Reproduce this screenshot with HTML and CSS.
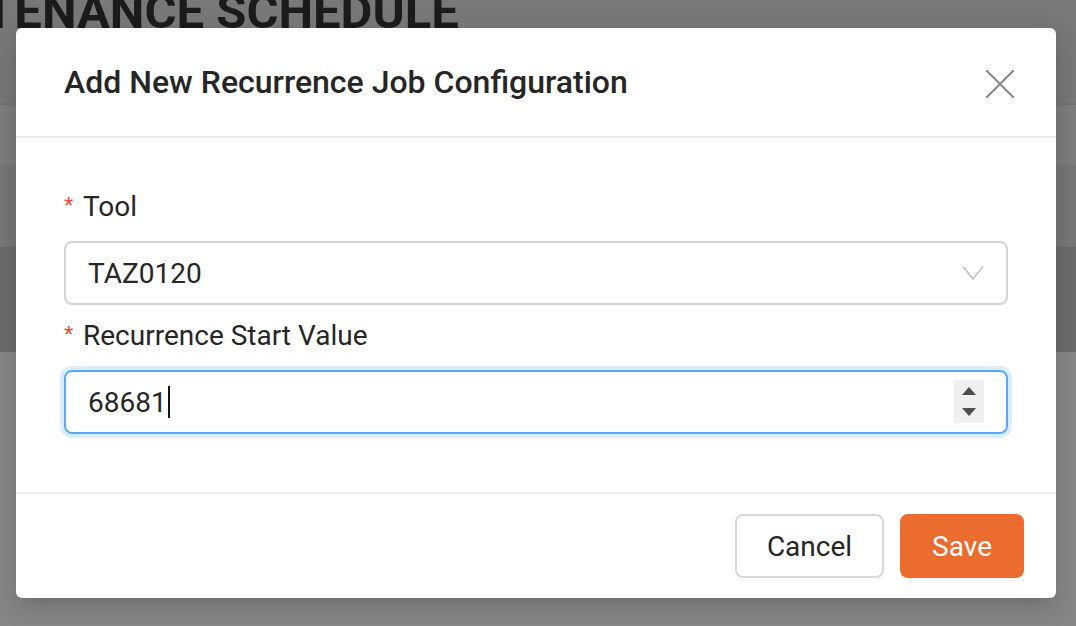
FILE: index.html
```html
<!DOCTYPE html>
<html lang="en">
<head>
<meta charset="utf-8">
<title>Add New Recurrence Job Configuration</title>
<link rel="stylesheet" href="styles.css">
</head>
<body>
<div class="page">
  <div class="page-head"><h1 class="page-title">TENANCE SCHEDULE</h1></div>
  <div class="band band-line"></div>
  <div class="band band-a"></div>
  <div class="band band-b"></div>
  <div class="band band-c"></div>
  <div class="band band-d"></div>
</div>

<div class="modal">
  <div class="modal-header">
    <div class="modal-title">Add New Recurrence Job Configuration</div>
    <button class="modal-close" aria-label="Close">
      <svg width="28" height="28" viewBox="0 0 28 28"><path d="M1 1 L27 27 M27 1 L1 27" stroke="#8a8a8a" stroke-width="2.2" fill="none" stroke-linecap="square"/></svg>
    </button>
  </div>
  <div class="modal-body">
    <div class="form-item">
      <label class="form-label"><span class="req">*</span>Tool</label>
      <div class="select">
        <span class="select-value">TAZ0120</span>
        <svg class="chevron" width="22" height="16" viewBox="0 0 22 16"><polyline points="1,1.5 11,14 21,1.5" fill="none" stroke="#c2c2c2" stroke-width="1.6"/></svg>
      </div>
    </div>
    <div class="form-item second">
      <label class="form-label"><span class="req">*</span>Recurrence Start Value</label>
      <div class="input focused">
        <span class="input-value">68681</span><span class="caret"></span>
        <div class="spinner">
          <span class="tri up"></span>
          <span class="tri down"></span>
        </div>
      </div>
    </div>
  </div>
  <div class="modal-footer">
    <button class="btn">Cancel</button>
    <button class="btn btn-primary">Save</button>
  </div>
</div>
</body>
</html>
```
FILE: styles.css
```css
* { box-sizing: border-box; }
html, body { margin: 0; padding: 0; }
body {
  width: 1076px;
  height: 626px;
  overflow: hidden;
  font-family: Roboto, "Liberation Sans", Arial, sans-serif;
  background: #868686;
  position: relative;
}
.page { display: flex; flex-direction: column; }
.page-head {
  height: 103px;
  background: #787878;
  overflow: hidden;
}
.page-title {
  margin: 0;
  font-family: Roboto, sans-serif;
  font-weight: 700;
  font-size: 49px;
  line-height: 49px;
  margin-top: -13px;
  margin-left: -16px;
  color: #1b1b1b;
  white-space: nowrap;
}
.band { width: 100%; }
.band-line { height: 2px; background: #727272; }
.band-a { height: 60px; background: #7d7d7d; }
.band-b { height: 82px; background: #777777; }
.band-c { height: 105px; background: #6b6b6b; }
.band-d { height: 274px; background: #868686; }

.modal {
  position: absolute;
  left: 16px;
  top: 28px;
  width: 1040px;
  background: #fff;
  border-radius: 6px;
  box-shadow: 0 8px 24px rgba(0,0,0,0.18);
  color: #262626;
}
.modal-header {
  position: relative;
  padding: 32px 48px;
  border-bottom: 2px solid #ececec;
}
.modal-title {
  font-size: 32px;
  font-weight: 500;
  line-height: 44px;
  color: #262626;
}
.modal-close {
  position: absolute;
  top: 0;
  right: 0;
  width: 112px;
  height: 112px;
  border: 0;
  background: transparent;
  padding: 0;
  display: flex;
  align-items: center;
  justify-content: center;
}
.modal-body {
  padding: 48px 48px 58px;
}
.form-item.second { margin-top: 10px; }
.form-label {
  display: flex;
  align-items: center;
  height: 42px;
  font-size: 28px;
  line-height: 42px;
  color: #262626;
  margin-bottom: 13px;
}
.req {
  display: inline-block;
  width: 11px;
  margin-right: 8px;
  color: #f04134;
  font-family: "Liberation Sans", sans-serif;
  font-size: 24px;
  line-height: 24px;
  position: relative;
  top: -1px;
}
.select, .input {
  height: 64px;
  border: 2px solid #d4d4d4;
  border-radius: 8px;
  display: flex;
  align-items: center;
  padding: 0 22px;
  font-size: 28px;
  color: #262626;
  position: relative;
}
.select { justify-content: space-between; }
.input.focused {
  border-color: #5ca8f6;
  box-shadow: 0 0 0 4px rgba(24,144,255,0.16);
}
.caret {
  display: inline-block;
  width: 2px;
  height: 32px;
  background: #111;
  margin-left: 1px;
}
.spinner {
  position: absolute;
  right: 22px;
  top: 8px;
  width: 30px;
  height: 43px;
  background: #efefef;
  display: flex;
  flex-direction: column;
  align-items: center;
  justify-content: space-between;
  padding: 7px 0;
}
.tri {
  width: 0;
  height: 0;
  border-left: 7px solid transparent;
  border-right: 7px solid transparent;
}
.tri.up { border-bottom: 8px solid #4e4e4e; }
.tri.down { border-top: 8px solid #4e4e4e; }

.modal-footer {
  border-top: 2px solid #ececec;
  padding: 20px 32px;
  display: flex;
  justify-content: flex-end;
  gap: 16px;
}
.btn {
  height: 64px;
  padding: 0 30px;
  font-family: Roboto, sans-serif;
  font-size: 28px;
  color: #262626;
  background: #fff;
  border: 2px solid #d9d9d9;
  border-radius: 8px;
  box-shadow: 0 4px 0 rgba(0,0,0,0.02);
}
.btn-primary {
  background: #ec6b2e;
  border-color: #ec6b2e;
  color: #fff;
}
```
